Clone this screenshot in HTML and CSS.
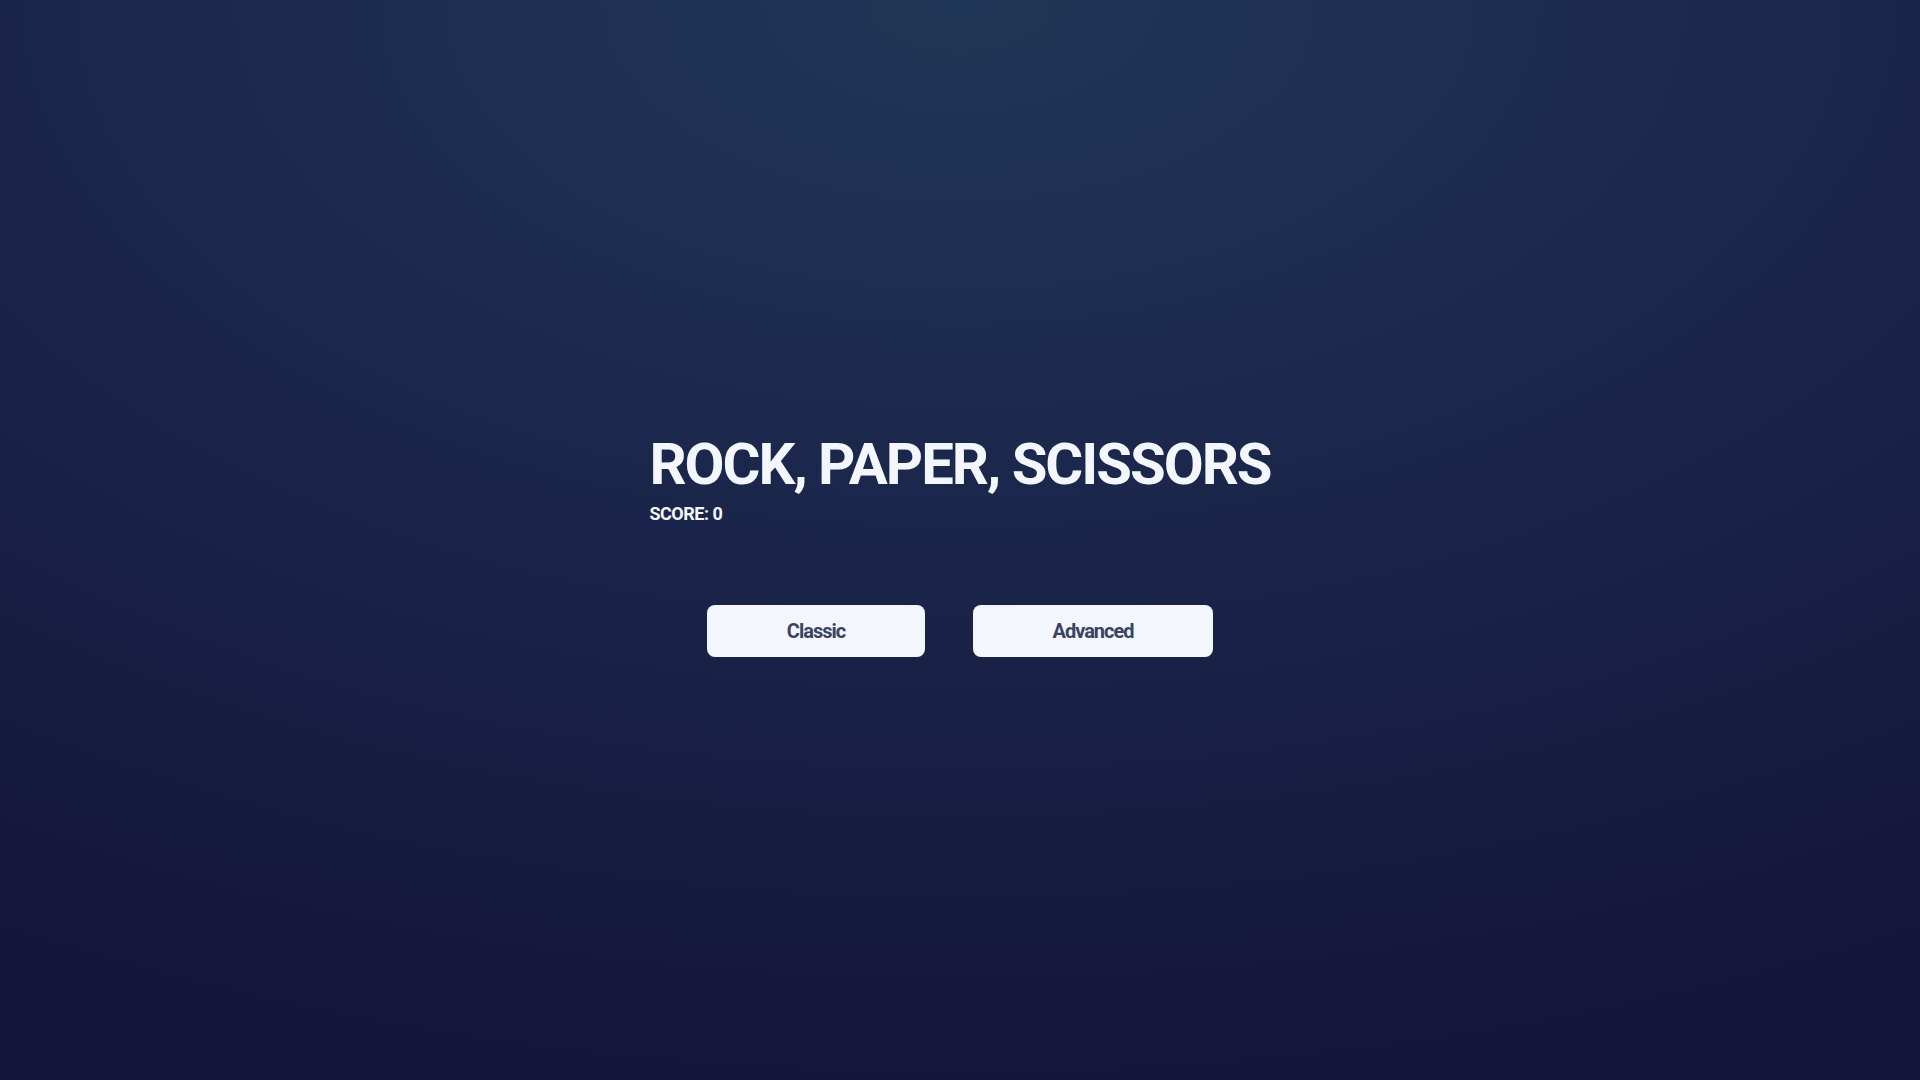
FILE: index.html
```html
<!DOCTYPE html>
<html lang="en">
<head>
<meta charset="utf-8">
<title>Rock, Paper, Scissors</title>
<link rel="stylesheet" href="styles.css">
</head>
<body>
<main class="game">
  <header class="header">
    <h1 class="title">ROCK, PAPER, SCISSORS</h1>
    <p class="score">SCORE: 0</p>
  </header>
  <div class="modes">
    <button class="mode mode-classic">Classic</button>
    <button class="mode mode-advanced">Advanced</button>
  </div>
</main>
</body>
</html>
```
FILE: styles.css
```css
html, body {
  margin: 0;
  padding: 0;
  height: 100%;
}
body {
  background: radial-gradient(ellipse 100% 100% at 50% 0%, #1f3756 0%, #1a2349 55%, #141539 100%);
  font-family: Roboto, "Liberation Sans", sans-serif;
  color: #f3f6fd;
}
.game {
  box-sizing: border-box;
  min-height: 100vh;
  padding-top: 11px;
  display: flex;
  flex-direction: column;
  align-items: center;
  justify-content: center;
}
.header {
  display: flex;
  flex-direction: column;
  align-items: flex-start;
}
.title {
  margin: 0;
  font-size: 58px;
  line-height: 58px;
  font-weight: 700;
  color: #f3f6fd;
  letter-spacing: -2px;
}
.score {
  margin: 11px 0 0;
  font-size: 18px;
  line-height: 20px;
  font-weight: 700;
  letter-spacing: -0.5px;
}
.modes {
  display: flex;
  gap: 48px;
  margin-top: 81px;
}
.mode {
  height: 52px;
  padding: 0;
  border: none;
  border-radius: 8px;
  background: #f3f6fd;
  color: #3b4363;
  font-family: inherit;
  font-size: 20px;
  font-weight: 700;
  letter-spacing: -1px;
  cursor: pointer;
}
.mode-classic { width: 218px; }
.mode-advanced { width: 240px; }
```
